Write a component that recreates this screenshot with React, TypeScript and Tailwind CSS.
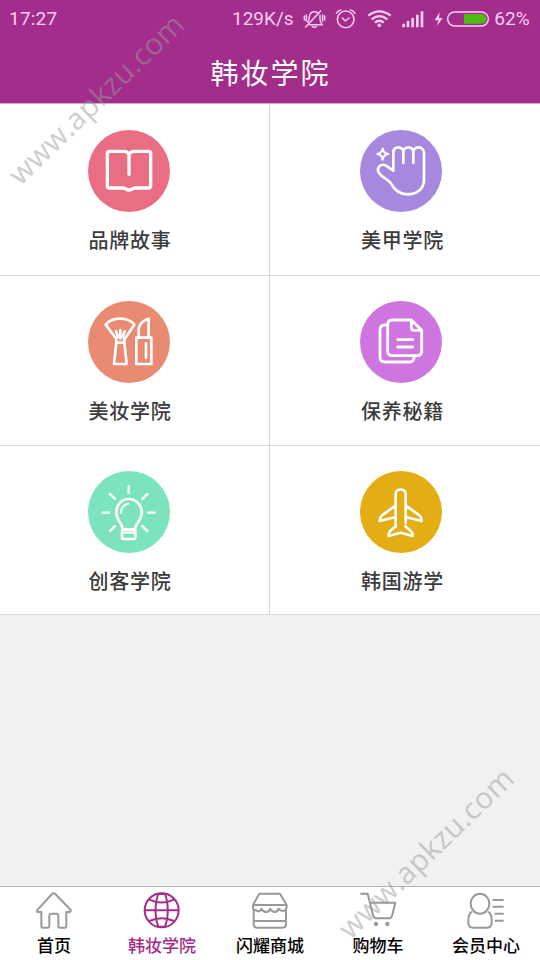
import type { ReactNode } from "react";

type Tile = { label: string; color: string; shift: string; icon: ReactNode };

const tiles: Tile[] = [
  {
    label: "品牌故事",
    color: "#e96e84",
    shift: "pt-[26px] pr-[12px]",
    icon: (
      <svg viewBox="54 29 246 246" className="size-full" fill="none" stroke="#fff" strokeWidth="10" strokeLinecap="round" strokeLinejoin="round">
        <path d="M177 162V104C175 96 169 93 160 93H119Q112 93 112 100V196Q112 203 119 203H158C166 203 168 209 177 209S188 203 196 203H235Q242 203 242 196V100Q242 93 235 93H194C185 93 179 96 177 104" />
      </svg>
    ),
  },
  {
    label: "美甲学院",
    color: "#a688df",
    shift: "pt-[26px] pr-[8px]",
    icon: (
      <svg viewBox="60 31 246 246" className="size-full" fill="none" stroke="#fff" strokeWidth="8" strokeLinecap="round" strokeLinejoin="round">
        <path d="M160 153V98C160 78 190 78 190 98V130M190 98C190 78 220 78 220 98V130M220 98C220 78 252 78 252 100V180C252 208 230 224 203 224C176 224 162 209 153 191C146 180 128 175 117 160C107 143 124 130 138 138L160 153" />
        <path strokeWidth="6.500" d="M128 87Q130 101 145 103Q130 105 128 120Q126 105 112 103Q126 101 128 87Z" />
      </svg>
    ),
  },
  {
    label: "美妆学院",
    color: "#e88b72",
    shift: "pt-[25px] pr-[12px]",
    icon: (
      <svg viewBox="54 33 246 246" className="size-full" fill="none" stroke="#fff" strokeWidth="8" strokeLinecap="round" strokeLinejoin="round">
        <path d="M139 147L107 104C127 80 174 80 193 104L164 147M139 142V158L132 222H170L163 158V142M139 158H163M151 146V120M144 140L138 124M158 140L164 124" />
        <path d="M199 143H244V222H199ZM206 143V116C209 100 220 91 236 86V143" />
        <path strokeWidth="8" d="M228 160V204" />
      </svg>
    ),
  },
  {
    label: "保养秘籍",
    color: "#cf75df",
    shift: "pt-[25px] pr-[8px]",
    icon: (
      <svg viewBox="61 33 246 246" className="size-full" fill="none" stroke="#fff" strokeWidth="8.500" strokeLinecap="round" strokeLinejoin="round">
        <path d="M215 90H158Q144 90 144 104V183Q144 197 158 197H232Q246 197 246 183V121L215 90V113Q215 121 223 121H246" />
        <path d="M143 105H136Q121 105 121 120V201Q121 216 136 216H209Q222 216 224 199M174 149H219M174 171H219" />
      </svg>
    ),
  },
  {
    label: "创客学院",
    color: "#7ce4bd",
    shift: "pt-[25px] pr-[12px]",
    icon: (
      <svg viewBox="53 31 246 246" className="size-full" fill="none" stroke="#fff" strokeWidth="8" strokeLinejoin="round">
        <path d="M157 207C157 188 138 181 138 154C138 131 155 115 175 115S214 131 214 154C214 181 194 188 194 207Z" />
        <rect x="155" y="207" width="40" height="28" rx="5" />
        <path strokeLinecap="round" strokeWidth="6" d="M152 157C152 143 160 132 174 129" />
        <path strokeWidth="7" d="M155 216H195M175 74V99M117 98L136 117M233 98L214 117M94 156H119M231 156H256M117 213L136 194M233 213L214 194" />
      </svg>
    ),
  },
  {
    label: "韩国游学",
    color: "#e5ad14",
    shift: "pt-[25px] pr-[8px]",
    icon: (
      <svg viewBox="61 31 246 246" className="size-full" fill="none" stroke="#fff" strokeWidth="8" strokeLinecap="round" strokeLinejoin="round">
        <path d="M168 199V100C168 82 198 82 198 100V188M168 134L126 165Q120 170 120 181L168 169M198 134L240 165Q246 170 246 181L198 169M168 197L151 212Q147 216 147 226L183 216L219 226Q219 216 214 212L197 197" />
      </svg>
    ),
  },
];

const tabs: { label: string; active?: boolean; icon: ReactNode }[] = [
  {
    label: "首页",
    icon: <path d="M124 96H112L111 91L156 42Q161 38 166 42L213 91L210 96H199V138Q199 143 194 143H180Q175 143 175 138V107Q175 101 169 101H154Q148 101 148 107V138Q148 143 143 143H129Q124 143 124 138Z" />,
  },
  {
    label: "韩妆学院",
    active: true,
    icon: (
      <g transform="translate(-325 0)">
        <circle cx="486" cy="91" r="51" />
        <path d="M435 91H537M449 59Q486 76 523 59M449 123Q486 106 523 123M476 42C465 70 465 112 476 140M496 42C507 70 507 112 496 140M476 42H496M476 140H496" />
      </g>
    ),
  },
  {
    label: "闪耀商城",
    icon: (
      <g transform="translate(-19 0)">
        <path d="M149 41H211L231 75H130ZM130 75V83Q130 91 140 91Q151 99 155 86Q160 97 171 96Q179 95 181 86Q188 97 197 96Q204 95 207 86Q213 95 223 92Q232 90 231 75M132 90V133Q132 143 142 143H219Q229 143 229 133V90M132 123H229" />
      </g>
    ),
  },
  {
    label: "购物车",
    icon: (
      <g transform="translate(-341 0)">
        <path d="M450 41H472L488 106Q490 115 499 115H535Q543 115 545 108L555 68H480" />
        <circle cx="497" cy="132" r="6.500" fill="currentColor" stroke="none" />
        <circle cx="531" cy="132" r="6.500" fill="currentColor" stroke="none" />
      </g>
    ),
  },
  {
    label: "会员中心",
    icon: (
      <g transform="translate(-127 0)">
        <ellipse cx="271" cy="71" rx="28" ry="30" />
        <path d="M247 95Q236 103 236 120V129Q236 143 251 143H290Q306 143 306 128V120Q306 103 295 95M309 60H342M309 80H342M315 101H342M315 122H342" />
      </g>
    ),
  },
];

function StatusIcons() {
  return (
    <svg viewBox="245 20 565 70" className="ml-[9px] h-[23.330px] w-[188.330px] shrink-0" fill="none" stroke="#fbcdf4" strokeWidth="4.500" strokeLinecap="round" strokeLinejoin="round">
      <path d="M301 32L256 80M262 66C270 60 261 34 282 34Q289 34 293 38M299 45V56Q299 66 306 73H268M276 79Q282 83 288 79" />
      <path d="M252 47V59M258 44V62M307 44V62M313 47V59" />
      <circle cx="376" cy="57" r="25" />
      <path d="M366 53L375 62L386 53M348 39Q352 31 362 29M390 29Q400 31 404 39" />
      <g strokeWidth="7" strokeLinecap="butt">
        <path d="M444 46Q477 20 511 46M454 57Q477 38 501 57M464 67Q477 56 490 67" />
      </g>
      <circle cx="477" cy="75" r="5.500" fill="#fbcdf4" stroke="none" />
      <path strokeLinecap="butt" strokeWidth="8" d="M550 81V70M563 81V62M577 81V53M591 81V43M605 81V33" />
      <path d="M658 36L643 60H654L650 77L667 53H656Z" fill="#fbcdf4" stroke="none" />
      <path d="M731 41H783Q798 42 798 56T783 70H731Z" fill="#4fba15" stroke="none" />
      <rect x="682" y="35" width="122" height="42" rx="21" />
    </svg>
  );
}

function Watermark({ place }: { place: string }) {
  return (
    <span
      className={`pointer-events-none absolute origin-bottom-left -rotate-[44deg] font-['Open_Sans',sans-serif] text-[29.500px] leading-[32px] font-medium tracking-[0.4px] whitespace-nowrap text-[#9b9b9b]/50 ${place}`}
    >
      www.apkzu.com
    </span>
  );
}

export default function App() {
  return (
    <div className="relative flex h-[960px] w-[540px] flex-col overflow-hidden bg-[#f1f1f1] font-['Liberation_Sans','Noto_Sans_CJK_SC',sans-serif]">
      <header className="h-[104px] shrink-0 border-b border-[#d9a5d2] bg-[#a32d8a] text-white">
        <div className="flex h-[38px] items-center pr-[9px] pl-[9px] font-[Roboto,sans-serif] text-[19px] text-[#fbcdf4]">
          <span className="w-[223px] tracking-[0.2px]">17:27</span>
          <span className="w-[61px] whitespace-nowrap">129K/s</span>
          <StatusIcons />
          <span className="ml-[4px]">62%</span>
        </div>
        <h1 className="pt-[6px] pl-[1px] text-center text-[28px] leading-[62px] tracking-[2px]">韩妆学院</h1>
      </header>

      <main className="grid shrink-0 grid-cols-[270px_270px] grid-rows-[172px_170px_169px] bg-white">
        {tiles.map((t, i) => (
          <section
            key={t.label}
            className={`flex flex-col items-center border-b border-[#d9d9d9] ${t.shift} ${i % 2 === 0 ? "border-r" : ""}`}
          >
            <div className="size-[82px] shrink-0 rounded-full" style={{ backgroundColor: t.color }}>
              {t.icon}
            </div>
            <h2 className="mt-[13px] pl-[3px] text-[20px] leading-[32px] font-medium tracking-[0.8px] text-[#3c3c3c]">{t.label}</h2>
          </section>
        ))}
      </main>

      <nav className="mt-auto grid h-[74px] shrink-0 grid-cols-5 border-t border-[#b3b3b3] bg-white">
        {tabs.map((t) => (
          <a key={t.label} className={`flex flex-col items-center pt-[4px] ${t.active ? "text-[#a32d8a]" : "text-black"}`}>
            <svg
              viewBox="105 33 114 117"
              className={`h-[39px] w-[38px] ${t.active ? "" : "text-[#999]"}`}
              fill="none"
              stroke="currentColor"
              strokeWidth="6"
              strokeLinejoin="round"
            >
              {t.icon}
            </svg>
            <span className="mt-[5px] text-[17px] leading-[24px] font-medium">{t.label}</span>
          </a>
        ))}
      </nav>

      <Watermark place="top-[158px] left-[24px]" />
      <Watermark place="top-[912px] left-[354px]" />
    </div>
  );
}
